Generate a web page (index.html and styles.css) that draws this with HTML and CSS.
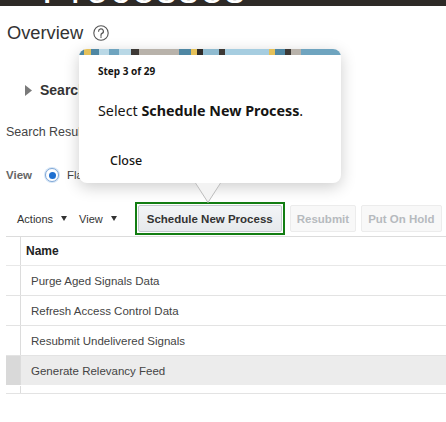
FILE: index.html
```html
<!DOCTYPE html>
<html lang="en">
<head>
<meta charset="utf-8">
<title>Scheduled Processes - Overview</title>
<link rel="stylesheet" href="styles.css">
</head>
<body>
<div class="topbar"><span class="topbar-title">Processes</span></div>
<main class="page">
  <h1 class="overview">Overview
    <svg class="help" width="16" height="16" viewBox="0 0 16 16" aria-hidden="true">
      <circle cx="8" cy="8" r="7.2" fill="none" stroke="#555" stroke-width="1.1"/>
      <path d="M5.6 6.2a2.4 2.4 0 1 1 3.4 2.2c-.7.35-1 .8-1 1.5v.5" fill="none" stroke="#555" stroke-width="1.2" stroke-linecap="round"/>
      <circle cx="8" cy="12.1" r=".8" fill="#555"/>
    </svg>
  </h1>
  <div class="search-row">
    <svg class="disclosure" width="7" height="11" viewBox="0 0 7 11" aria-hidden="true"><path d="M0 0L7 5.5L0 11Z" fill="#7a7a7a"/></svg>
    <span>Search</span>
  </div>
  <div class="results-title">Search Results</div>
  <div class="view-row">
    <span class="view-label">View</span>
    <span class="radio"><span class="radio-dot checked"></span>Flat List</span>
    <span class="radio"><span class="radio-dot"></span>Hierarchy</span>
  </div>
  <div class="toolbar">
    <span class="menu">Actions <span class="caret"></span></span>
    <span class="menu">View <span class="caret"></span></span>
    <span class="highlight"><span class="btn">Schedule New Process</span></span>
    <span class="btn disabled">Resubmit</span>
    <span class="btn disabled">Put On Hold</span>
  </div>
  <div class="table">
    <div class="row head"><span class="sel"></span><span class="cell">Name</span></div>
    <div class="row"><span class="sel"></span><span class="cell">Purge Aged Signals Data</span></div>
    <div class="row"><span class="sel"></span><span class="cell">Refresh Access Control Data</span></div>
    <div class="row"><span class="sel"></span><span class="cell">Resubmit Undelivered Signals</span></div>
    <div class="row selected"><span class="sel"></span><span class="cell">Generate Relevancy Feed</span></div>
    <div class="row filler"><span class="sel"></span><span class="cell"></span></div>
  </div>
</main>
<div class="popup">
  <div class="popup-banner"></div>
  <div class="popup-body">
    <div class="step">Step 3 of 29</div>
    <p class="instruction">Select <b>Schedule New Process</b>.</p>
    <span class="close">Close</span>
  </div>
</div>
<svg class="pointer" width="26" height="21" viewBox="0 0 26 21" aria-hidden="true">
  <path d="M0.5 0L13 19.5L25.5 0" fill="#f3f3f3" stroke="#bdbdbd" stroke-width="1"/>
</svg>
</body>
</html>
```

FILE: styles.css
```css
* { box-sizing: border-box; }

body {
  margin: 0;
  font-family: "Liberation Sans", Arial, sans-serif;
  color: #333;
  background: #fff;
  position: relative;
  width: 446px;
  height: 422px;
  overflow: hidden;
}

.topbar {
  height: 6px;
  background: #2e2a27;
  overflow: hidden;
  padding-left: 42px;
}

.topbar-title {
  display: block;
  font-size: 40px;
  line-height: 40px;
  margin-top: -31px;
  color: #fff;
  letter-spacing: 2px;
}

.page {
  padding-left: 6px;
}

.overview {
  margin: 16px 0 0 1px;
  height: 22px;
  display: flex;
  align-items: center;
  gap: 10px;
  font-size: 18.3px;
  font-weight: normal;
  color: #333;
}

.help { display: block; }

.search-row {
  margin-top: 36px;
  height: 20px;
  padding-left: 19px;
  display: flex;
  align-items: center;
  gap: 8px;
  font-size: 14px;
  font-weight: bold;
  color: #333;
}

.disclosure { display: block; }

.results-title {
  margin-top: 24px;
  height: 16px;
  line-height: 16px;
  font-size: 12.5px;
  color: #444;
}

.view-row {
  margin-top: 26px;
  height: 18px;
  display: flex;
  align-items: center;
  font-size: 11.5px;
}

.view-label {
  font-weight: bold;
  color: #666;
  margin-right: 13px;
}

.radio {
  display: flex;
  align-items: center;
  gap: 8px;
  color: #444;
  margin-right: 20px;
}

.radio-dot {
  width: 14px;
  height: 14px;
  border-radius: 50%;
  border: 1px solid #8d96a0;
  background: #fff;
  display: flex;
  align-items: center;
  justify-content: center;
}

.radio-dot.checked {
  border-color: #7fa7d6;
  box-shadow: 0 0 0 1px #d5e5f6;
}

.radio-dot.checked::after {
  content: "";
  width: 7px;
  height: 7px;
  border-radius: 50%;
  background: #1e6fd0;
}

.toolbar {
  margin-top: 17px;
  height: 36px;
  padding-left: 11px;
  display: flex;
  align-items: center;
  border-bottom: 1px solid #dcdcdc;
  font-size: 11px;
}

.menu {
  display: flex;
  align-items: center;
  gap: 8px;
  color: #333;
  margin-right: 12px;
}

.menu + .menu { margin-right: 18px; }

.caret {
  width: 0;
  height: 0;
  border-left: 3.5px solid transparent;
  border-right: 3.5px solid transparent;
  border-top: 5px solid #333;
}

.highlight {
  border: 2px solid #127d12;
  padding: 1px;
  margin-right: 5px;
}

.btn {
  display: flex;
  align-items: center;
  height: 27px;
  padding: 0 8px;
  border: 1px solid #c3c8cd;
  border-radius: 2px;
  background: linear-gradient(#f3f5f7, #e6e9ec);
  font-size: 11.5px;
  font-weight: bold;
  color: #333;
  white-space: nowrap;
}

.highlight .btn {
  width: 144px;
  justify-content: center;
  padding: 0;
}

.btn.disabled {
  background: #f8f8f8;
  border-color: #ececec;
  color: #b6babe;
  padding: 0 6px;
  margin-right: 5px;
}

.table {
  display: flex;
  flex-direction: column;
}

.row {
  display: flex;
  height: 30px;
  border-bottom: 1px solid #e3e3e3;
}

.row .sel {
  width: 15px;
  border-right: 1px solid #dcdcdc;
}

.row .cell {
  flex: 1;
  display: flex;
  align-items: center;
  padding-left: 10px;
  font-size: 11.5px;
  color: #444;
}

.row.head {
  height: 29px;
  border-bottom-color: #e8e8e8;
}

.row.head .cell {
  padding-left: 5px;
  font-size: 12px;
  font-weight: bold;
  color: #222;
}

.row.selected {
  border-bottom-color: transparent;
}

.row.selected .sel { background: #d9d9d9; }
.row.selected .cell { background: #ececec; }

.row.filler { height: 8px; }

.popup {
  position: absolute;
  left: 79px;
  top: 49px;
  width: 262px;
  height: 134px;
  background: #fff;
  border-radius: 8px;
  box-shadow: 0 4px 16px rgba(0, 0, 0, 0.2);
  overflow: hidden;
  font-family: "Noto Sans", "Open Sans", sans-serif;
  color: #161513;
}

.popup-banner {
  height: 6px;
  background: linear-gradient(90deg,
    #4f87a3 0 5px, #e5c15a 5px 12px, #4f87a3 12px 20px, #b9d8e6 20px 30px, #6fa4bf 30px 40px,
    #b9d8e6 40px 52px, #3d3935 52px 60px, #b8b2aa 60px 100px, #4f87a3 100px 112px,
    #e5c15a 112px 118px, #2f2b28 118px 124px, #8fbbd0 124px 140px, #3d3935 140px 146px,
    #a6cde0 146px 190px, #e5c15a 190px 196px, #4f87a3 196px 206px, #3d3935 206px 212px,
    #b8b2aa 212px 222px, #6fa4bf 222px 262px);
}

.popup-body {
  padding: 10px 19px 0;
}

.step {
  font-size: 10px;
  font-weight: bold;
  line-height: 12px;
}

.instruction {
  margin: 24px 0 0;
  font-size: 14.3px;
  line-height: 20px;
}

.instruction b { font-weight: bold; }

.close {
  display: inline-block;
  margin: 32px 0 0 12px;
  font-size: 12.5px;
  font-weight: 500;
  line-height: 16px;
}

.pointer {
  position: absolute;
  left: 195px;
  top: 183px;
}
```
